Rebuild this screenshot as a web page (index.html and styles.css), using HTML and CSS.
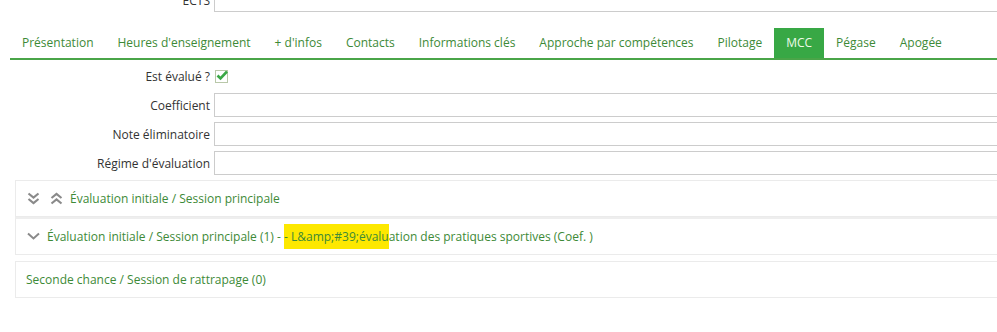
FILE: index.html
```html
<!DOCTYPE html>
<html lang="fr">
<head>
    <meta charset="UTF-8">
    <title>MCC</title>
    <link rel="stylesheet" href="styles.css">
</head>
<body>
    <div class="page">
        <!-- champ du dessus, coupé par le scroll -->
        <div class="form-row ects-row">
            <label class="form-label">ECTS</label>
            <div class="form-field"><input type="text" class="form-input"></div>
        </div>

        <ul class="tabs">
            <li class="tab">Présentation</li>
            <li class="tab">Heures d'enseignement</li>
            <li class="tab">+ d'infos</li>
            <li class="tab">Contacts</li>
            <li class="tab">Informations clés</li>
            <li class="tab">Approche par compétences</li>
            <li class="tab">Pilotage</li>
            <li class="tab active">MCC</li>
            <li class="tab">Pégase</li>
            <li class="tab">Apogée</li>
        </ul>

        <div class="form">
            <div class="form-row">
                <label class="form-label">Est évalué ?</label>
                <div class="form-field">
                    <svg class="checkbox" width="14" height="14" viewBox="0 0 14 14">
                        <rect x="0.5" y="1.5" width="12" height="12" fill="#fff" stroke="#b9c8a9"/>
                        <path d="M2.5 6.5 L5.5 9.5 L12 2.5" fill="none" stroke="#3aa845" stroke-width="2.6"/>
                    </svg>
                </div>
            </div>
            <div class="form-row">
                <label class="form-label">Coefficient</label>
                <div class="form-field"><input type="text" class="form-input"></div>
            </div>
            <div class="form-row">
                <label class="form-label">Note éliminatoire</label>
                <div class="form-field"><input type="text" class="form-input"></div>
            </div>
            <div class="form-row">
                <label class="form-label">Régime d'évaluation</label>
                <div class="form-field"><input type="text" class="form-input"></div>
            </div>
        </div>

        <div class="panel-group">
            <div class="panel">
                <svg class="icon icon-wide" width="13" height="13" viewBox="0 0 13 13">
                    <path d="M1.5 1.5 L6.5 5.5 L11.5 1.5 M1.5 7 L6.5 11 L11.5 7" fill="none" stroke="#8a8a8a" stroke-width="2.2"/>
                </svg>
                <svg class="icon" width="13" height="13" viewBox="0 0 13 13">
                    <path d="M1.5 6 L6.5 2 L11.5 6 M1.5 11.5 L6.5 7.5 L11.5 11.5" fill="none" stroke="#8a8a8a" stroke-width="2.2"/>
                </svg>
                <span class="panel-title">Évaluation initiale / Session principale</span>
            </div>
            <div class="panel">
                <svg class="icon" width="13" height="9" viewBox="0 0 13 9">
                    <path d="M1 1.5 L6.5 6.5 L12 1.5" fill="none" stroke="#8a8a8a" stroke-width="2"/>
                </svg>
                <span class="panel-title">Évaluation initiale / Session principale (1) - <span class="highlight">- L&amp;amp;#39;évalu</span>ation des pratiques sportives (Coef. )</span>
            </div>
        </div>

        <div class="panel-group">
            <div class="panel">
                <span class="panel-title">Seconde chance / Session de rattrapage (0)</span>
            </div>
        </div>
    </div>
</body>
</html>
```

FILE: styles.css
```css
body {
    margin: 0;
    font-family: "Open Sans", sans-serif;
    font-size: 12px;
    color: #333;
    background: #fff;
    overflow: hidden;
}
.page {
    margin-right: -20px;
}
.form-row {
    display: flex;
    align-items: center;
    height: 24px;
    margin-bottom: 5px;
}
.ects-row {
    margin-top: -12px;
    margin-bottom: 0;
}
.form-label {
    width: 214px;
    padding-right: 4px;
    text-align: right;
    box-sizing: border-box;
}
.form-field {
    flex: 1;
    display: flex;
    align-items: center;
}
.form-input {
    width: 100%;
    height: 24px;
    box-sizing: border-box;
    border: 1px solid #ccc;
    border-right: none;
    padding: 2px 6px;
    font: inherit;
}
.checkbox {
    display: block;
    margin-left: 1px;
}
.tabs {
    display: flex;
    list-style: none;
    margin: 16px 0 0 10px;
    padding: 0;
    border-bottom: 2px solid #4aa548;
}
.tab {
    padding: 0 12px;
    height: 30px;
    line-height: 30px;
    color: #3d8a37;
}
.tab.active {
    background: #38a845;
    color: #eefbe9;
}
.form {
    margin-top: 4px;
}
.panel-group {
    margin: 0 0 6px 15px;
}
.panel {
    display: flex;
    align-items: center;
    height: 35px;
    padding: 0 10px;
    border: 1px solid #ebebeb;
    border-right: none;
    color: #3d8a37;
}
.panel + .panel {
    border-top-width: 2px;
    border-top-color: #eeeeee;
}
.icon {
    display: block;
    margin-left: 1px;
    margin-right: 7px;
}
.icon + .icon {
    margin-left: 0;
}
.icon-wide {
    margin-right: 10px;
}
.highlight {
    background: #fde800;
    padding: 4px 0;
}
```
